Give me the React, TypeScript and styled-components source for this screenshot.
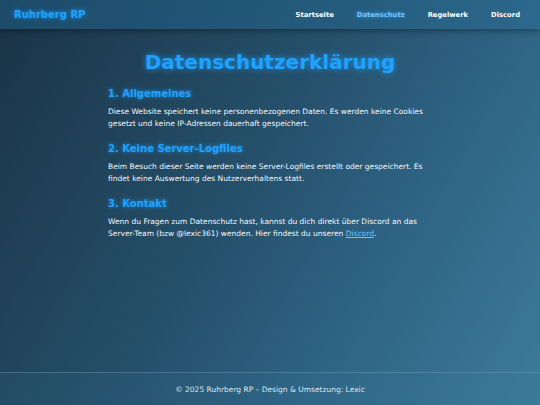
import React from 'react'
import styled, { createGlobalStyle } from 'styled-components'

const GlobalStyle = createGlobalStyle`
  html, body, #root {
    margin: 0;
    padding: 0;
    height: 100%;
  }
  body {
    font-family: 'DejaVu Sans', Verdana, sans-serif;
    background: linear-gradient(120deg, #1b3346 0%, #25506b 45%, #2f6485 70%, #3c7b9a 100%);
    color: #ffffff;
  }
`

const sections = [
  {
    title: '1. Allgemeines',
    text: 'Diese Website speichert keine personenbezogenen Daten. Es werden keine Cookies gesetzt und keine IP-Adressen dauerhaft gespeichert.',
  },
  {
    title: '2. Keine Server-Logfiles',
    text: 'Beim Besuch dieser Seite werden keine Server-Logfiles erstellt oder gespeichert. Es findet keine Auswertung des Nutzerverhaltens statt.',
  },
]

const navItems = ['Startseite', 'Datenschutz', 'Regelwerk', 'Discord']

export default function App() {
  return (
    <>
      <GlobalStyle />
      <Page>
        <Header>
          <Logo>Ruhrberg RP</Logo>
          <Nav>
            {navItems.map((item) => (
              <NavLink key={item} href="#" $active={item === 'Datenschutz'}>
                {item}
              </NavLink>
            ))}
          </Nav>
        </Header>

        <Main>
          <Title>Datenschutzerklärung</Title>

          {sections.map((s) => (
            <Section key={s.title}>
              <SectionTitle>{s.title}</SectionTitle>
              <Paragraph>{s.text}</Paragraph>
            </Section>
          ))}

          <Section>
            <SectionTitle>3. Kontakt</SectionTitle>
            <Paragraph>
              Wenn du Fragen zum Datenschutz hast, kannst du dich direkt über Discord an das
              Server-Team (bzw @lexic361) wenden. Hier findest du unseren{' '}
              <InlineLink href="#">Discord</InlineLink>.
            </Paragraph>
          </Section>
        </Main>

        <Footer>© 2025 Ruhrberg RP – Design &amp; Umsetzung: Lexic</Footer>
      </Page>
    </>
  )
}

const Page = styled.div`
  display: flex;
  flex-direction: column;
  min-height: 100vh;
`

const Header = styled.header`
  display: flex;
  align-items: center;
  justify-content: space-between;
  height: 29px;
  padding: 0 20px 0 14px;
  background: linear-gradient(90deg, rgba(30, 95, 135, 0.55), rgba(40, 110, 150, 0.45));
  box-shadow: 0 2px 6px rgba(0, 0, 0, 0.35);
`

const Logo = styled.div`
  font-size: 10px;
  font-weight: 700;
  color: #1ea2ff;
  text-shadow: 0 0 4px rgba(30, 162, 255, 0.9);
`

const Nav = styled.nav`
  display: flex;
  gap: 23px;
`

const NavLink = styled.a<{ $active?: boolean }>`
  font-size: 6.8px;
  font-weight: 700;
  text-decoration: none;
  color: ${(p) => (p.$active ? '#72c4ff' : '#ffffff')};
  text-shadow: ${(p) => (p.$active ? '0 0 4px rgba(60, 170, 255, 0.9)' : 'none')};
`

const Main = styled.main`
  flex: 1;
  width: 324px;
  margin: 0 auto;
  padding-top: 21px;
`

const Title = styled.h1`
  margin: 0 0 14px;
  text-align: center;
  font-size: 20px;
  font-weight: 700;
  color: #1ea2ff;
  text-shadow: 0 0 6px rgba(30, 162, 255, 0.85);
`

const Section = styled.section`
  margin-bottom: 13px;
`

const SectionTitle = styled.h2`
  margin: 0 0 6px;
  font-size: 10px;
  line-height: 12px;
  font-weight: 700;
  color: #1ea2ff;
  text-shadow: 0 0 4px rgba(30, 162, 255, 0.8);
`

const Paragraph = styled.p`
  margin: 0;
  font-size: 7.5px;
  line-height: 12px;
  color: #f2f6fa;
`

const InlineLink = styled.a`
  color: #6cc4ff;
  text-decoration: underline;
`

const Footer = styled.footer`
  border-top: 1px solid rgba(120, 170, 200, 0.35);
  background: rgba(60, 120, 160, 0.12);
  height: 32px;
  display: flex;
  align-items: center;
  justify-content: center;
  font-size: 7.5px;
  color: #dfe7ee;
`
